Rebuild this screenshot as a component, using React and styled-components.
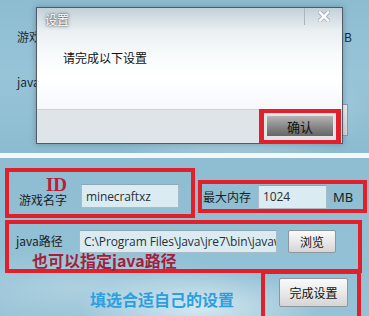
import React from "react";
import styled, { createGlobalStyle } from "styled-components";

const Global = createGlobalStyle`
  html, body { margin: 0; padding: 0; }
  body {
    width: 369px;
    height: 316px;
    overflow: hidden;
    background: #f2f6f8;
    font-family: "Noto Sans CJK SC", "Noto Sans", sans-serif;
  }
  * { box-sizing: border-box; }
`;

const Page = styled.div`
  width: 369px;
  height: 316px;
  display: flex;
  flex-direction: column;
`;

const TopPanel = styled.div`
  position: relative;
  height: 153px;
  background:
    radial-gradient(ellipse 140px 60px at 230px 110px, rgba(214, 232, 240, 0.7), transparent),
    linear-gradient(180deg, #8dbcd1 0%, #98c4d8 50%, #8cbbd0 100%);
`;

const Separator = styled.div`
  height: 5px;
  background: #f3f7f9;
`;

const BgForm = styled.div`
  display: flex;
  flex-direction: column;
  padding: 28px 17px 0 17px;
  font-size: 12px;
  color: #1d2a33;
`;

const BgRow = styled.div`
  display: flex;
  justify-content: space-between;
  align-items: center;
  height: 16px;
  margin-top: ${(p) => p.$mt || 0}px;
`;

const BgButton = styled.div`
  align-self: flex-end;
  margin-right: 4px;
  margin-top: ${(p) => p.$mt || 0}px;
  width: 70px;
  height: 32px;
  border: 1px solid #8e9aa2;
  background: linear-gradient(180deg, #f2f2f2, #d6d6d6);
`;

const Dialog = styled.div`
  position: absolute;
  left: 36px;
  top: 7px;
  width: 307px;
  height: 137px;
  border: 1px solid #4f5c67;
  display: flex;
  flex-direction: column;
  background: #fff;
  box-shadow: 0 0 6px rgba(0, 0, 0, 0.25);
`;

const TitleBar = styled.div`
  height: 23px;
  display: flex;
  justify-content: space-between;
  align-items: flex-start;
  background: linear-gradient(180deg, #c3d0d8 0%, #dbe3e8 60%, #eaeff2 100%);
`;

const Title = styled.span`
  padding: 5px 0 0 8px;
  font-size: 12px;
  line-height: 14px;
  color: #ffffff;
  text-shadow: 0 0 2px rgba(40, 50, 60, 0.9), 0 0 4px rgba(40, 50, 60, 0.6);
`;

const CloseButton = styled.div`
  width: 38px;
  height: 17px;
  border-left: 1px solid #aab6be;
  display: flex;
  align-items: center;
  justify-content: center;
`;

const DialogBody = styled.div`
  flex: 1;
  padding: 19px 0 0 26px;
  font-size: 12px;
  line-height: 16px;
  color: #111;
  background: linear-gradient(180deg, #eaeff2 0%, #f8fafb 30%, #ffffff 60%, #f6f8fa 100%);
`;

const DialogFooter = styled.div`
  height: 34px;
  display: flex;
  justify-content: flex-end;
  background: #dfe4e9;
  border-top: 1px solid #ccd3d9;
  padding-right: 1px;
`;

const RedBox = styled.div`
  border: 4px solid #e2202b;
  border-left-width: ${(p) => p.$side || 4}px;
  border-right-width: ${(p) => p.$side || 4}px;
  width: ${(p) => p.$w}px;
  height: ${(p) => p.$h}px;
  margin-top: ${(p) => p.$mt || 0}px;
  margin-left: ${(p) => p.$ml || 0}px;
  margin-right: ${(p) => p.$mr || 0}px;
  flex-shrink: 0;
`;

const FooterBox = styled(RedBox)`
  padding: 2px;
  margin-top: -1px;
`;

const DarkButton = styled.div`
  width: 68px;
  height: 22px;
  display: flex;
  align-items: center;
  justify-content: center;
  font-size: 13px;
  color: #111;
  border: 1px solid #e6e6e6;
  background: linear-gradient(180deg, #b4b4b4 0%, #8a8a8a 50%, #666 100%);
`;

const BottomPanel = styled.div`
  flex: 1;
  display: flex;
  flex-direction: column;
  padding: 10px 2px 0 5px;
  overflow: hidden;
  background:
    radial-gradient(ellipse 120px 40px at 200px 150px, rgba(224, 238, 244, 0.85), transparent),
    radial-gradient(ellipse 160px 40px at 80px 130px, rgba(200, 224, 235, 0.5), transparent),
    linear-gradient(180deg, #8ebdd2 0%, #95c2d6 100%);
`;

const Row = styled.div`
  display: flex;
  align-items: flex-start;
  gap: ${(p) => p.$gap || 0}px;
  margin-top: ${(p) => p.$mt || 0}px;
`;

const NameBox = styled(RedBox)`
  display: flex;
  align-items: flex-start;
  padding: 5px 0 0 7px;
  gap: 14px;
`;

const LabelStack = styled.div`
  display: flex;
  flex-direction: column;
  align-items: flex-end;
  width: 51px;
`;

const IdMark = styled.span`
  font-family: "Liberation Serif", serif;
  font-weight: bold;
  font-size: 19px;
  line-height: 16px;
  color: #b8203a;
`;

const Label = styled.span`
  font-size: 12px;
  line-height: 14px;
  color: #1a1f24;
  white-space: nowrap;
  width: ${(p) => (p.$w ? `${p.$w}px` : "auto")};
`;

const Input = styled.div`
  width: ${(p) => p.$w}px;
  height: ${(p) => p.$h || 24}px;
  margin-top: ${(p) => p.$mt || 0}px;
  flex-shrink: 0;
  display: flex;
  align-items: center;
  padding-left: 4px;
  overflow: hidden;
  white-space: nowrap;
  font-family: "Open Sans", "Noto Sans", sans-serif;
  font-size: 12px;
  letter-spacing: -0.1px;
  color: #2a2f33;
  background: #dbebf2;
  border: 1px solid #a7bcc8;
  border-top-color: #8fa6b3;
`;

const MemBox = styled(RedBox)`
  display: flex;
  align-items: center;
  padding-left: 1px;
`;

const Unit = styled.span`
  margin-left: 6px;
  font-family: "Noto Sans", sans-serif;
  font-size: 13px;
  color: #1a1f24;
`;

const JavaBox = styled(RedBox)`
  display: flex;
  flex-direction: column;
  padding: 5px 0 0 7px;
  position: relative;
  z-index: 1;
`;

const JavaRow = styled.div`
  display: flex;
  align-items: center;
  height: 24px;
`;

const LightButton = styled.div`
  width: ${(p) => p.$w}px;
  height: ${(p) => p.$h}px;
  margin-left: ${(p) => p.$ml || 0}px;
  margin-top: ${(p) => p.$mt || 0}px;
  flex-shrink: 0;
  display: flex;
  align-items: center;
  justify-content: center;
  font-size: 12px;
  color: #111;
  border: 1px solid #8c969c;
  border-radius: 2px;
  background: linear-gradient(180deg, #fafafa 0%, #e9e9e9 50%, #d5d5d5 100%);
`;

const Annotation = styled.span`
  margin: -1px 0 0 16px;
  font-weight: bold;
  font-size: 16px;
  line-height: 16px;
  color: #a41f3d;
  white-space: nowrap;
`;

const Hint = styled.span`
  margin: 20px 0 0 85px;
  font-weight: bold;
  font-size: 16px;
  line-height: 18px;
  color: #2c9fe0;
  white-space: nowrap;
`;

const FinishBox = styled(RedBox)`
  padding: 4px 0 0 14px;
`;

function CloseIcon() {
  return (
    <svg width="12" height="11" viewBox="0 0 12 11">
      <path d="M2 1.5 L10 9.5 M10 1.5 L2 9.5" stroke="#6b7a85" strokeWidth="4" strokeLinecap="round" opacity="0.45" />
      <path d="M2 1.5 L10 9.5 M10 1.5 L2 9.5" stroke="#ffffff" strokeWidth="2.4" strokeLinecap="square" />
    </svg>
  );
}

export default function App() {
  return (
    <>
      <Global />
      <Page>
        <TopPanel>
          <BgForm>
            <BgRow>
              <span>游戏名字</span>
              <span>MB</span>
            </BgRow>
            <BgRow $mt={29}>
              <span>java路径</span>
            </BgRow>
            <BgButton $mt={15} />
          </BgForm>
          <Dialog>
            <TitleBar>
              <Title>设置</Title>
              <CloseButton>
                <CloseIcon />
              </CloseButton>
            </TitleBar>
            <DialogBody>请完成以下设置</DialogBody>
            <DialogFooter>
              <FooterBox $w={82} $h={35} $side={5}>
                <DarkButton>确认</DarkButton>
              </FooterBox>
            </DialogFooter>
          </Dialog>
        </TopPanel>
        <Separator />
        <BottomPanel>
          <Row $gap={3}>
            <NameBox $w={190} $h={50}>
              <LabelStack>
                <IdMark>ID</IdMark>
                <Label>游戏名字</Label>
              </LabelStack>
              <Input $w={98} $mt={7}>minecraftxz</Input>
            </NameBox>
            <MemBox $w={169} $h={33} $mt={12}>
              <Label $w={55}>最大内存</Label>
              <Input $w={69}>1024</Input>
              <Unit>MB</Unit>
            </MemBox>
          </Row>
          <Row $mt={2}>
            <JavaBox $w={357} $h={53}>
              <JavaRow>
                <Label $w={63}>java路径</Label>
                <Input $w={198} $h={23}>C:\Program Files\Java\jre7\bin\javaw.exe</Input>
                <LightButton $w={48} $h={23} $ml={11}>浏览</LightButton>
              </JavaRow>
              <Annotation>也可以指定java路径</Annotation>
            </JavaBox>
          </Row>
          <Row $mt={-3}>
            <Hint>填选合适自己的设置</Hint>
            <FinishBox $w={100} $h={60} $ml={27}>
              <LightButton $w={69} $h={29}>完成设置</LightButton>
            </FinishBox>
          </Row>
        </BottomPanel>
      </Page>
    </>
  );
}
